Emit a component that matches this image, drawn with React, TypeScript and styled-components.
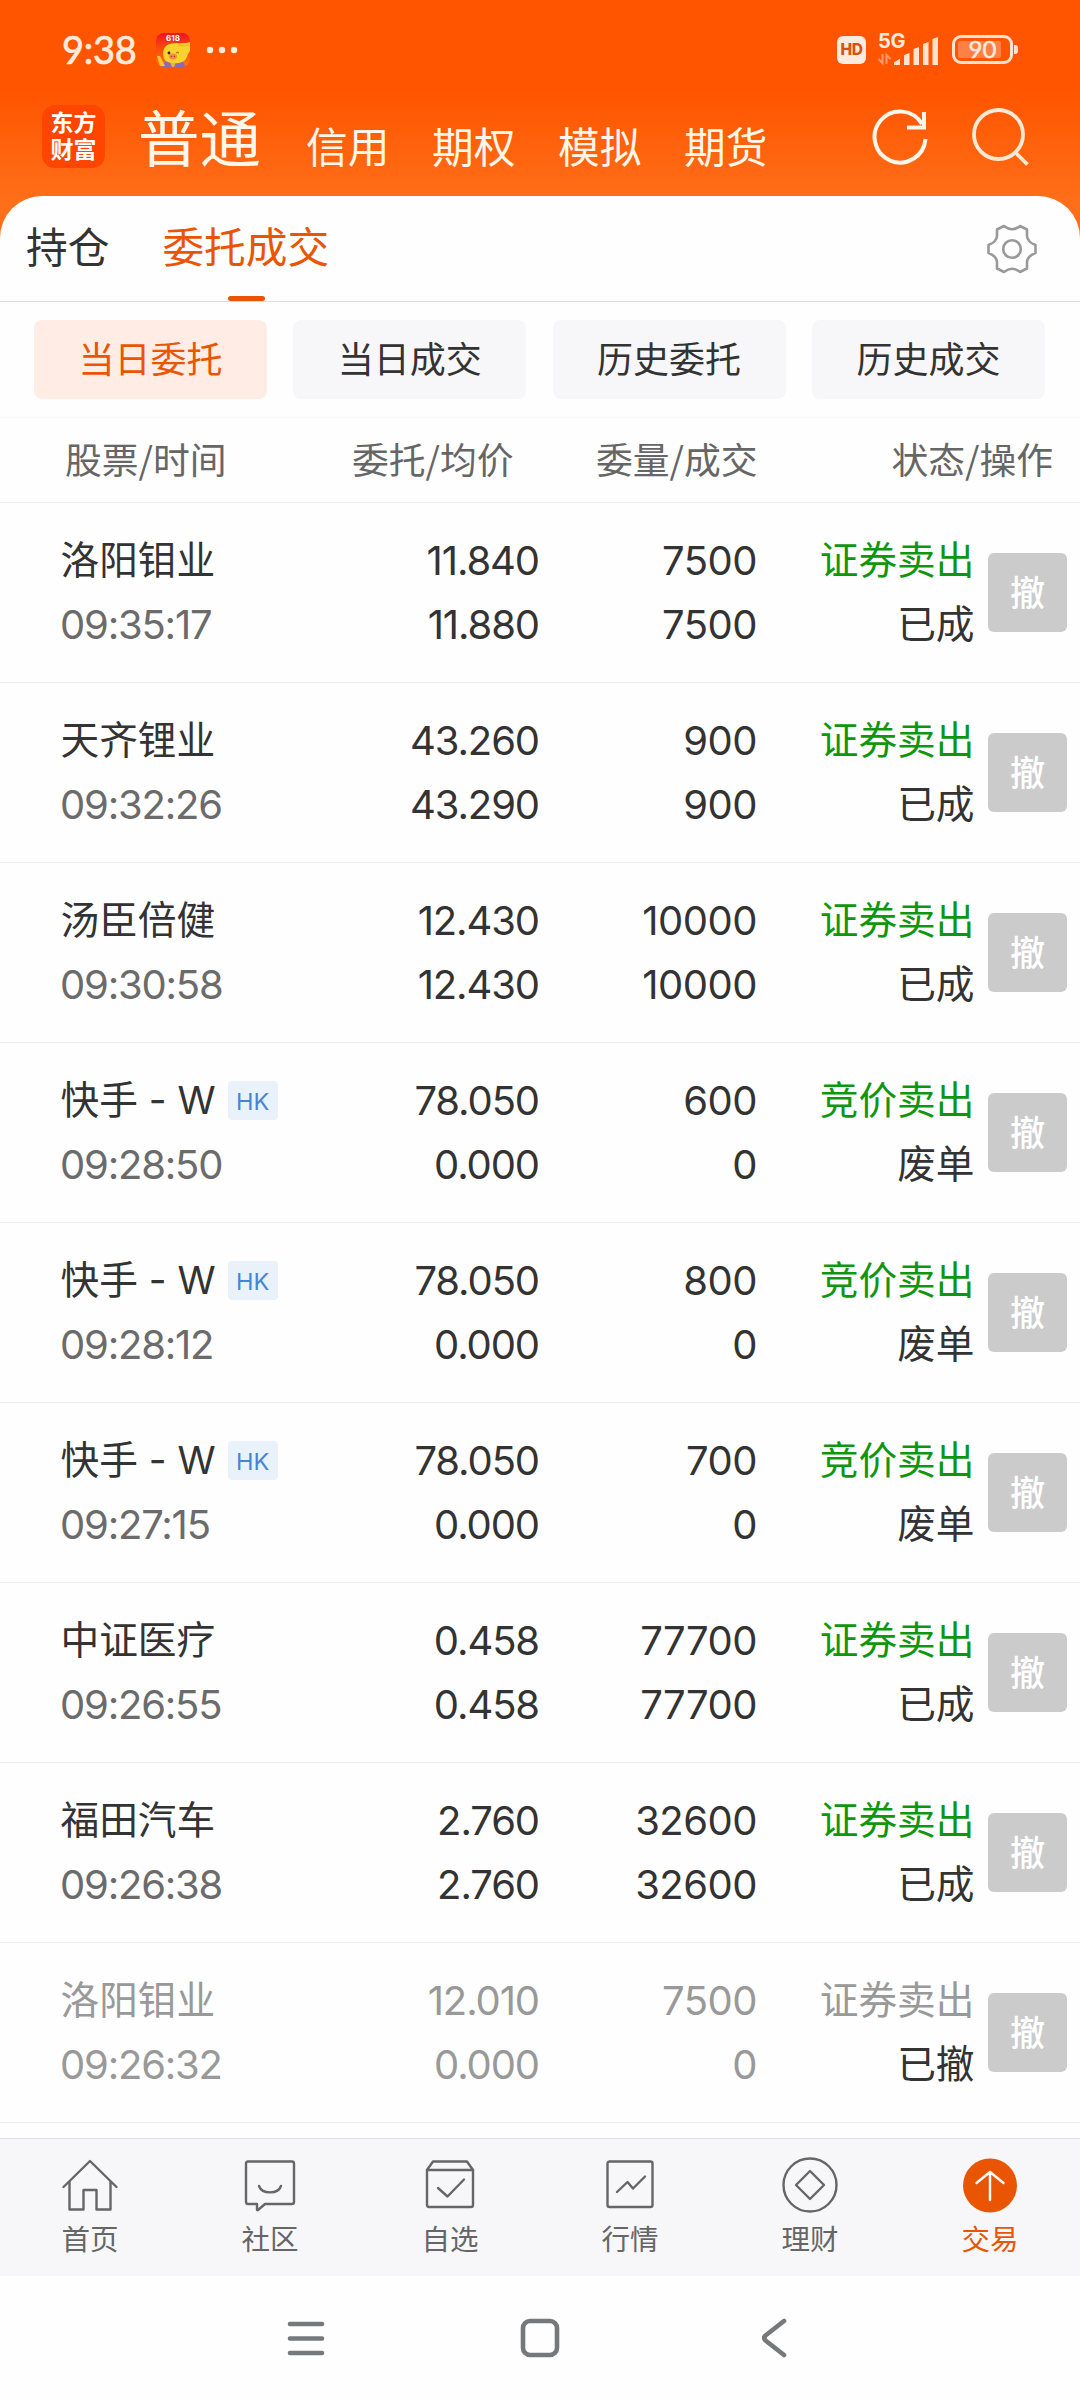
import React from "react";
import styled, { createGlobalStyle } from "styled-components";

const GlobalStyle = createGlobalStyle`
  * { box-sizing: border-box; }
  body {
    margin: 0;
    background: #fefefe;
    font-family: Inter, "Noto Sans CJK SC", sans-serif;
    color: #333;
  }
`;

const Screen = styled.div`
  width: 1080px;
  height: 2400px;
  overflow: hidden;
  display: flex;
  flex-direction: column;
  background: linear-gradient(#ff5500 0, #ff5500 92px, #ff6e18 200px, #ff7016 250px);
`;

const StatusBar = styled.div`
  height: 99px;
  display: flex;
  align-items: center;
  padding: 0 62px 0 62px;
  color: #ffeadb;
`;

const Clock = styled.span`
  font-family: Lato, sans-serif;
  font-size: 38px;
  line-height: 99px;
  width: 94px;
  letter-spacing: -0.3px;
  -webkit-text-stroke: 0.7px #ffeadb;
`;

const Spacer = styled.div`
  flex: 1;
`;

const HdBadge = styled.span`
  width: 29px;
  height: 28px;
  border-radius: 6px;
  background: #ffeadf;
  color: #d8510f;
  font-size: 15.5px;
  font-weight: 800;
  line-height: 28px;
  text-align: center;
  letter-spacing: -0.5px;
`;

const Network = styled.div`
  position: relative;
  width: 61px;
  height: 32px;
  margin: 0 13px 0 12px;
`;

const NetworkLabel = styled.span`
  position: absolute;
  left: 0;
  top: 0;
  font-size: 20px;
  font-weight: 700;
  line-height: 15px;
  letter-spacing: -0.3px;
`;

const Battery = styled.div`
  position: relative;
  width: 61px;
  height: 29px;
  border: 3px solid #ffe3d0;
  border-radius: 9px;
  padding: 3px;
`;

const BatteryFill = styled.div`
  width: 43px;
  height: 17px;
  background: #ff8045;
  border-radius: 2px;
`;

const BatteryText = styled.span`
  position: absolute;
  inset: 0;
  text-align: center;
  font-family: Lato, sans-serif;
  font-size: 24px;
  font-weight: 400;
  line-height: 22px;
  -webkit-text-stroke: 0.5px #ffeadb;
`;

const BatteryNub = styled.div`
  width: 4px;
  height: 9px;
  margin-left: 1px;
  border-radius: 0 3px 3px 0;
  background: #ffe3d0;
`;

const Header = styled.header`
  height: 97px;
  display: flex;
  align-items: flex-start;
  padding-left: 42px;
  color: #fff6ea;
`;

const Logo = styled.div`
  width: 63px;
  height: 63px;
  margin-top: 6px;
  padding-top: 1px;
  border-radius: 13px;
  background: #ff4500;
  color: #fff;
  display: flex;
  flex-direction: column;
  justify-content: center;
  align-items: center;
  font-family: "Liberation Sans", "Noto Sans CJK SC", sans-serif;
  font-weight: 700;
  font-size: 23px;
  line-height: 27px;
`;

const MainMode = styled.h1`
  margin: 0 0 0 33px;
  font-size: 61.5px;
  font-weight: 400;
  line-height: 82px;
  width: 168px;
`;

const Modes = styled.nav`
  display: flex;
  gap: 42px;
  padding-top: 19px;
`;

const Mode = styled.span`
  font-size: 41.7px;
  line-height: 61px;
  width: 84px;
`;

const HeaderIcons = styled.div`
  display: flex;
  gap: 40px;
  margin: 8px 0 0 104px;
`;

const Panel = styled.main`
  height: 2204px;
  background: #fefefe;
  border-radius: 42px 42px 0 0;
  display: flex;
  flex-direction: column;
`;

const Tabs = styled.div`
  height: 106px;
  flex: none;
  display: flex;
  align-items: flex-start;
  border-bottom: 1px solid #dedede;
  padding: 0 43px 0 26px;
`;

const Tab = styled.div<{ $active?: boolean }>`
  position: relative;
  height: 105px;
  margin-right: 53px;
  font-size: 41.7px;
  line-height: 104px;
  color: ${(p) => (p.$active ? "#ea5504" : "#333")};
  &::after {
    content: "";
    display: ${(p) => (p.$active ? "block" : "none")};
    position: absolute;
    left: calc(50% - 18px);
    bottom: 0;
    width: 37px;
    height: 5px;
    border-radius: 3px;
    background: #ea5504;
  }
`;

const GearBox = styled.div`
  padding-top: 28px;
`;

const Chips = styled.div`
  height: 116px;
  flex: none;
  display: grid;
  grid-template-columns: repeat(4, 233px);
  column-gap: 26.3px;
  padding: 18px 0 0 34px;
  border-bottom: 1px solid #f7f8f8;
`;

const Chip = styled.button<{ $active?: boolean }>`
  height: 79px;
  border: 0;
  padding: 0 0 5px;
  border-radius: 8px;
  font-family: inherit;
  font-size: 36px;
  background: ${(p) => (p.$active ? "#ffede5" : "#f7f7f9")};
  color: ${(p) => (p.$active ? "#ea5504" : "#333")};
`;

const HeadRow = styled.div`
  height: 85px;
  flex: none;
  display: grid;
  grid-template-columns: 287px 244px 244px 1fr;
  padding: 0 27px 0 65px;
  font-family: "Noto Sans CJK SC", sans-serif;
  font-size: 36.8px;
  line-height: 81px;
  color: #666;
  border-bottom: 1px solid #ededed;
  white-space: nowrap;
  & > :last-child { text-align: right; }
`;

const Row = styled.div<{ $muted?: boolean }>`
  height: 180px;
  flex: none;
  display: grid;
  grid-template-columns: 280px 199px 218px 216px 79px;
  align-items: center;
  padding: 0 0 0 60px;
  border-bottom: 1px solid #ededed;
  color: ${(p) => (p.$muted ? "#999" : "#333")};
`;

const Cell = styled.div<{ $right?: boolean }>`
  display: flex;
  flex-direction: column;
  align-items: ${(p) => (p.$right ? "flex-end" : "flex-start")};
  white-space: nowrap;
`;

const Line = styled.div`
  height: 64px;
  display: flex;
  align-items: center;
  line-height: 64px;
`;

const StockName = styled.span`
  font-size: 38.7px;
  padding: 0 0 1px 0.5px;
`;

const spacing = { time: "-1.2px", price: "-1.1px", qty: "-0.5px" };

const Num = styled.span<{ $kind: keyof typeof spacing; $dim?: boolean }>`
  font-size: 40px;
  letter-spacing: ${(p) => spacing[p.$kind]};
  color: ${(p) => (p.$dim ? "#6b6b6b" : "inherit")};
`;

const Status = styled.span<{ $tone: "sell" | "dark" | "muted" }>`
  font-size: 38.7px;
  padding-bottom: 1px;
  margin-right: -1.5px;
  color: ${(p) => ({ sell: "#0f960f", dark: "#333", muted: "#999" })[p.$tone]};
`;

const Market = styled.span`
  width: 50px;
  height: 39px;
  margin-left: 12px;
  border-radius: 4px;
  background: #e9f1fa;
  color: #4585d6;
  font-size: 23.5px;
  line-height: 41px;
  text-align: center;
`;

const Cancel = styled.button`
  width: 79px;
  height: 79px;
  margin-left: 15px;
  border: 0;
  padding: 0 0 5px;
  border-radius: 6px;
  background: #cbcbcb;
  color: #fff;
  font-family: inherit;
  font-size: 35px;
  font-weight: 500;
`;

const BottomNav = styled.nav`
  height: 138px;
  flex: none;
  margin-top: 15px;
  display: grid;
  grid-template-columns: repeat(6, 1fr);
  background: #f7f7fa;
  border-top: 1px solid #dfdfe1;
`;

const NavItem = styled.div<{ $active?: boolean }>`
  display: flex;
  flex-direction: column;
  align-items: center;
  padding-top: 18px;
  font-size: 28.5px;
  line-height: 44px;
  color: ${(p) => (p.$active ? "#ea5504" : "#666")};
  svg { margin-bottom: 5px; }
`;

const SystemNav = styled.div`
  flex: 1;
  display: flex;
  justify-content: center;
  padding-top: 40px;
  gap: 190px;
`;

type Order = {
  name: string;
  hk?: boolean;
  time: string;
  price: [string, string];
  qty: [string, string];
  side: string;
  state: string;
  muted?: boolean;
};

const orders: Order[] = [
  { name: "洛阳钼业", time: "09:35:17", price: ["11.840", "11.880"], qty: ["7500", "7500"], side: "证券卖出", state: "已成" },
  { name: "天齐锂业", time: "09:32:26", price: ["43.260", "43.290"], qty: ["900", "900"], side: "证券卖出", state: "已成" },
  { name: "汤臣倍健", time: "09:30:58", price: ["12.430", "12.430"], qty: ["10000", "10000"], side: "证券卖出", state: "已成" },
  { name: "快手 - W", hk: true, time: "09:28:50", price: ["78.050", "0.000"], qty: ["600", "0"], side: "竞价卖出", state: "废单" },
  { name: "快手 - W", hk: true, time: "09:28:12", price: ["78.050", "0.000"], qty: ["800", "0"], side: "竞价卖出", state: "废单" },
  { name: "快手 - W", hk: true, time: "09:27:15", price: ["78.050", "0.000"], qty: ["700", "0"], side: "竞价卖出", state: "废单" },
  { name: "中证医疗", time: "09:26:55", price: ["0.458", "0.458"], qty: ["77700", "77700"], side: "证券卖出", state: "已成" },
  { name: "福田汽车", time: "09:26:38", price: ["2.760", "2.760"], qty: ["32600", "32600"], side: "证券卖出", state: "已成" },
  { name: "洛阳钼业", time: "09:26:32", price: ["12.010", "0.000"], qty: ["7500", "0"], side: "证券卖出", state: "已撤", muted: true },
];

const PigIcon = () => (
  <svg width="34" height="34" viewBox="0 0 34 34">
    <defs>
      <clipPath id="pig"><rect width="34" height="34" rx="8" /></clipPath>
      <linearGradient id="pigbg" x1="0" y1="0" x2="0" y2="1">
        <stop offset="0" stopColor="#f0102c" />
        <stop offset="0.35" stopColor="#f8400c" />
        <stop offset="1" stopColor="#ff7a10" />
      </linearGradient>
    </defs>
    <g clipPath="url(#pig)">
      <rect width="34" height="34" fill="url(#pigbg)" />
      <path d="M6 34L9 29H27L30 34Z" fill="#8a6bb8" />
      <path d="M14 29H20L18 34H16Z" fill="#f4b13c" />
      <path d="M1 23L4 23L9 33H4Z" fill="#f5c832" />
      <path d="M7 21Q7 10 20 10Q29 11 34 9V18Q32 20 31 24Q28 31 18 30Q7 30 7 21Z" fill="#fad22d" />
      <path d="M22 12Q29 14 34 12" stroke="#e8b41c" strokeWidth="1" fill="none" />
      <circle cx="13" cy="20" r="1.4" fill="#3a2410" />
      <path d="M20 20Q21.500 18.500 23 20" stroke="#8a5a18" strokeWidth="1" fill="none" />
      <ellipse cx="17" cy="23.500" rx="4" ry="3" fill="#f58a4c" />
      <circle cx="15.600" cy="23.500" r="0.800" fill="#b0401c" />
      <circle cx="18.400" cy="23.500" r="0.800" fill="#b0401c" />
      <text x="17" y="8" textAnchor="middle" fontSize="8" fontWeight="700" fill="#fff">618</text>
    </g>
  </svg>
);

const DotsSvg = styled.svg`
  margin-left: 16px;
`;

const Dots = () => (
  <DotsSvg width="32" height="8" viewBox="0 0 32 8" fill="#ffeadb">
    <circle cx="4" cy="4" r="3.2" />
    <circle cx="16" cy="4" r="3.2" />
    <circle cx="28" cy="4" r="3.2" />
  </DotsSvg>
);

const Signal = () => (
  <svg width="61" height="32" viewBox="0 0 61 32">
    <g fill="#ffe3d0">
      <path d="M16 31V28.5L22 24.5V31Z" />
      <path d="M26 31V21L31.500 19V31Z" />
      <path d="M35.500 31V15L41 13V31Z" />
      <path d="M45 31V10L50.500 8V31Z" />
      <path d="M54.500 31V5L60 3V31Z" />
    </g>
    <g stroke="#ff9a6b" strokeWidth="2" fill="none">
      <path d="M4.500 20V29L0.500 25" />
      <path d="M8.500 30V21L12.500 25" />
    </g>
  </svg>
);

const RefreshIcon = () => (
  <svg width="60" height="60" viewBox="0 0 60 60" fill="none" stroke="#fff6ea" strokeWidth="4">
    <path d="M53.500 32A25.500 25.500 0 1 1 50 17" />
    <path d="M52 5V20.500H35" />
  </svg>
);

const SearchIcon = () => (
  <svg width="60" height="60" viewBox="0 0 60 60" fill="none" stroke="#ffe9d6" strokeWidth="3.8">
    <circle cx="26.500" cy="27.500" r="24.500" />
    <path d="M43 45L55.500 57.500" />
  </svg>
);

const GearIcon = () => (
  <svg width="50" height="50" viewBox="0 0 50 50" fill="none" stroke="#999" strokeWidth="2.600" strokeLinejoin="round">
    <circle cx="25" cy="25" r="8.800" />
    <path d="M17 2Q25 8.500 33 2L40 5.500V12Q40.500 18 48.500 21V29Q40.500 32 40 38V44.500L33 48Q25 41.500 17 48L10 44.500V38Q9.500 32 1.500 29V21Q9.500 18 10 12V5.500Z" />
  </svg>
);

const iconProps = { width: 56, height: 56, viewBox: "0 0 56 56", fill: "none", stroke: "#666", strokeWidth: 2.4, strokeLinejoin: "round" as const, strokeLinecap: "round" as const };

const HomeIcon = () => (
  <svg {...iconProps}>
    <path d="M1.500 30L28 4L54.500 30" />
    <path d="M7.500 25V52.500H21.500V33H34.500V52.500H48.500V25" />
  </svg>
);
const CommunityIcon = () => (
  <svg {...iconProps}>
    <path d="M6 4.500H50Q52 4.500 52 6.500V45Q52 47 50 47H23L16 53H15V47H6Q4 47 4 45V6.500Q4 4.500 6 4.500Z" />
    <path d="M17 29C20 37.500 36 37.500 39 29" />
  </svg>
);
const WatchIcon = () => (
  <svg {...iconProps}>
    <path d="M5 13L11 4.500H45L51 13V48Q51 50 49 50H7Q5 50 5 48Z" />
    <path d="M5 13H51M16 31L25.500 39.500L42 22.500" />
  </svg>
);
const MarketIcon = () => (
  <svg {...iconProps}>
    <rect x="5.500" y="4.500" width="45" height="45.500" rx="2" />
    <path d="M15 35L25.500 25L31 31.500L43 19.500" />
  </svg>
);
const WealthIcon = () => (
  <svg {...iconProps}>
    <circle cx="28" cy="28" r="26.500" />
    <path d="M28 14L42 28L28 42L14 28Z" />
  </svg>
);
const TradeIcon = () => (
  <svg {...iconProps} stroke="#fff">
    <circle cx="28" cy="28.500" r="27" fill="#ea5504" stroke="none" />
    <path d="M28 43V15M14.500 26L28 15L41.500 26" />
  </svg>
);

const navItems = [
  { label: "首页", Icon: HomeIcon },
  { label: "社区", Icon: CommunityIcon },
  { label: "自选", Icon: WatchIcon },
  { label: "行情", Icon: MarketIcon },
  { label: "理财", Icon: WealthIcon },
  { label: "交易", Icon: TradeIcon, active: true },
];

const sysProps = { width: 44, height: 44, viewBox: "0 0 44 44", fill: "none", stroke: "#77787a", strokeWidth: 4.6, strokeLinecap: "round" as const, strokeLinejoin: "round" as const };

export default function App() {
  return (
    <>
      <GlobalStyle />
      <Screen>
        <StatusBar>
          <Clock>9:38</Clock>
          <PigIcon />
          <Dots />
          <Spacer />
          <HdBadge>HD</HdBadge>
          <Network>
            <NetworkLabel>5G</NetworkLabel>
            <Signal />
          </Network>
          <Battery>
            <BatteryFill />
            <BatteryText>90</BatteryText>
          </Battery>
          <BatteryNub />
        </StatusBar>
        <Header>
          <Logo>
            <span>东方</span>
            <span>财富</span>
          </Logo>
          <MainMode>普通</MainMode>
          <Modes>
            {["信用", "期权", "模拟", "期货"].map((m) => (
              <Mode key={m}>{m}</Mode>
            ))}
          </Modes>
          <HeaderIcons>
            <RefreshIcon />
            <SearchIcon />
          </HeaderIcons>
        </Header>
        <Panel>
          <Tabs>
            <Tab>持仓</Tab>
            <Tab $active>委托成交</Tab>
            <Spacer />
            <GearBox><GearIcon /></GearBox>
          </Tabs>
          <Chips>
            <Chip $active>当日委托</Chip>
            <Chip>当日成交</Chip>
            <Chip>历史委托</Chip>
            <Chip>历史成交</Chip>
          </Chips>
          <HeadRow>
            <span>股票/时间</span>
            <span>委托/均价</span>
            <span>委量/成交</span>
            <span>状态/操作</span>
          </HeadRow>
          {orders.map((o) => (
            <Row key={o.time} $muted={o.muted}>
              <Cell>
                <Line>
                  <StockName>{o.name}</StockName>
                  {o.hk && <Market>HK</Market>}
                </Line>
                <Line><Num $kind="time" $dim={!o.muted}>{o.time}</Num></Line>
              </Cell>
              <Cell $right>
                {o.price.map((v, i) => <Line key={i}><Num $kind="price">{v}</Num></Line>)}
              </Cell>
              <Cell $right>
                {o.qty.map((v, i) => <Line key={i}><Num $kind="qty">{v}</Num></Line>)}
              </Cell>
              <Cell $right>
                <Line><Status $tone={o.muted ? "muted" : "sell"}>{o.side}</Status></Line>
                <Line><Status $tone="dark">{o.state}</Status></Line>
              </Cell>
              <Cancel>撤</Cancel>
            </Row>
          ))}
          <BottomNav>
            {navItems.map(({ label, Icon, active }) => (
              <NavItem key={label} $active={active}>
                <Icon />
                <span>{label}</span>
              </NavItem>
            ))}
          </BottomNav>
          <SystemNav>
            <svg {...sysProps}><path d="M6 8H38M6 22.500H38M6 37H38" /></svg>
            <svg {...sysProps}><rect x="5" y="5" width="34" height="34" rx="7" /></svg>
            <svg {...sysProps}><path d="M32 5L13.500 19.500Q11 22 13.500 24.500L32 39" /></svg>
          </SystemNav>
        </Panel>
      </Screen>
    </>
  );
}
